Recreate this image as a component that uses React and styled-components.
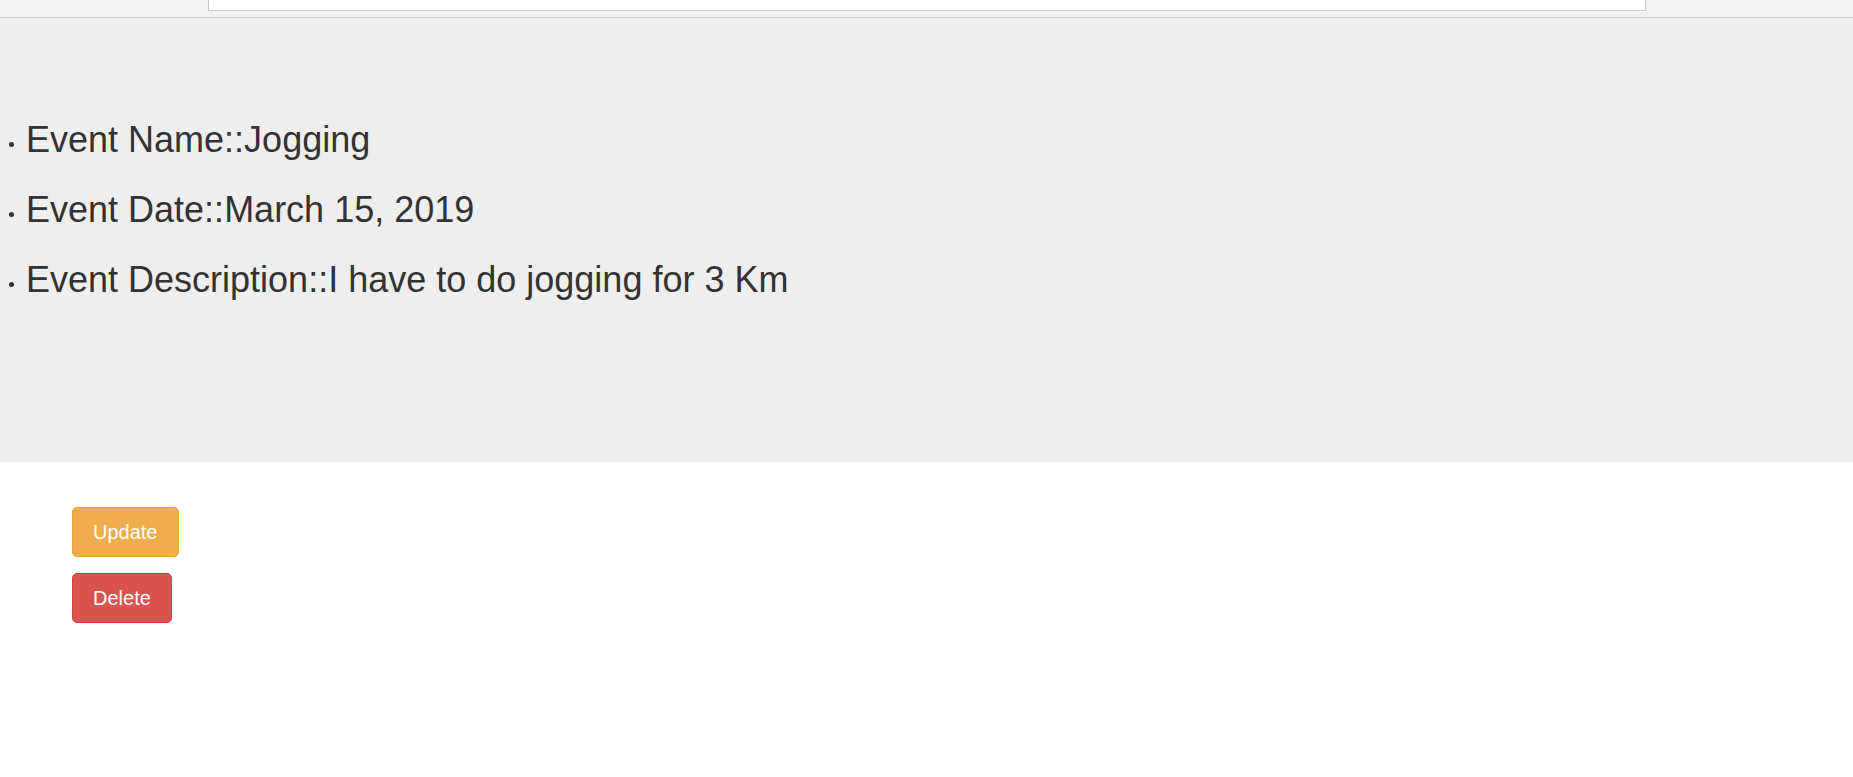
import React from 'react';
import styled, { createGlobalStyle } from 'styled-components';

const GlobalStyle = createGlobalStyle`
  html, body {
    margin: 0;
    padding: 0;
    background: #fff;
  }
  body {
    font-family: "Liberation Sans", Arial, Helvetica, sans-serif;
    font-size: 14px;
    color: #333;
  }
`;

const TopBar = styled.div`
  height: 17px;
  overflow: hidden;
  display: flex;
  justify-content: center;
  align-items: flex-end;
  background-color: #f2f2f2;
  border-bottom: 1px solid #cfcfcf;
  box-sizing: content-box;
`;

const SearchInput = styled.input`
  width: 1438px;
  height: 34px;
  flex-shrink: 0;
  margin-bottom: 6px;
  box-sizing: border-box;
  border: 1px solid #ccc;
  background: #fff;
  outline: none;
`;

const Jumbotron = styled.div`
  background-color: #eee;
  padding: 102px 0 162px;
`;

const EventList = styled.ul`
  list-style: none;
  margin: 0;
  padding: 0;
  display: flex;
  flex-direction: column;
  gap: 30px;
`;

const EventItem = styled.li`
  display: flex;
  align-items: flex-start;
`;

const Dot = styled.span`
  width: 5px;
  height: 5px;
  border-radius: 50%;
  background-color: #333;
  margin: 22px 12px 0 9px;
  flex-shrink: 0;
`;

const EventText = styled.h1`
  margin: 0;
  font-size: 36px;
  line-height: 40px;
  font-weight: 400;
  color: #333;
`;

const Actions = styled.div`
  display: flex;
  flex-direction: column;
  align-items: flex-start;
  gap: 16px;
  padding: 45px 0 0 72px;
`;

const Button = styled.button`
  font-family: "Liberation Sans", Arial, Helvetica, sans-serif;
  font-size: 20px;
  line-height: 24px;
  padding: 12px 20px;
  color: #fff;
  border-radius: 5px;
  cursor: pointer;
  background-color: ${(p) => (p.variant === 'danger' ? '#d9534f' : '#f0ad4e')};
  border: 1px solid ${(p) => (p.variant === 'danger' ? '#d43f3a' : '#eea236')};

  &:hover {
    background-color: ${(p) => (p.variant === 'danger' ? '#c9302c' : '#ec971f')};
  }
`;

const event = {
  name: 'Jogging',
  date: 'March 15, 2019',
  description: 'I have to do jogging for 3 Km'
};

const App = () => {
  const rows = [
    ['Event Name', event.name],
    ['Event Date', event.date],
    ['Event Description', event.description]
  ];

  return (
    <>
      <GlobalStyle />
      <TopBar>
        <SearchInput type="text" />
      </TopBar>
      <Jumbotron>
        <EventList>
          {rows.map(([label, value]) => (
            <EventItem key={label}>
              <Dot />
              <EventText>
                {label}::{value}
              </EventText>
            </EventItem>
          ))}
        </EventList>
      </Jumbotron>
      <Actions>
        <Button>Update</Button>
        <Button variant="danger">Delete</Button>
      </Actions>
    </>
  );
};

export default App;
